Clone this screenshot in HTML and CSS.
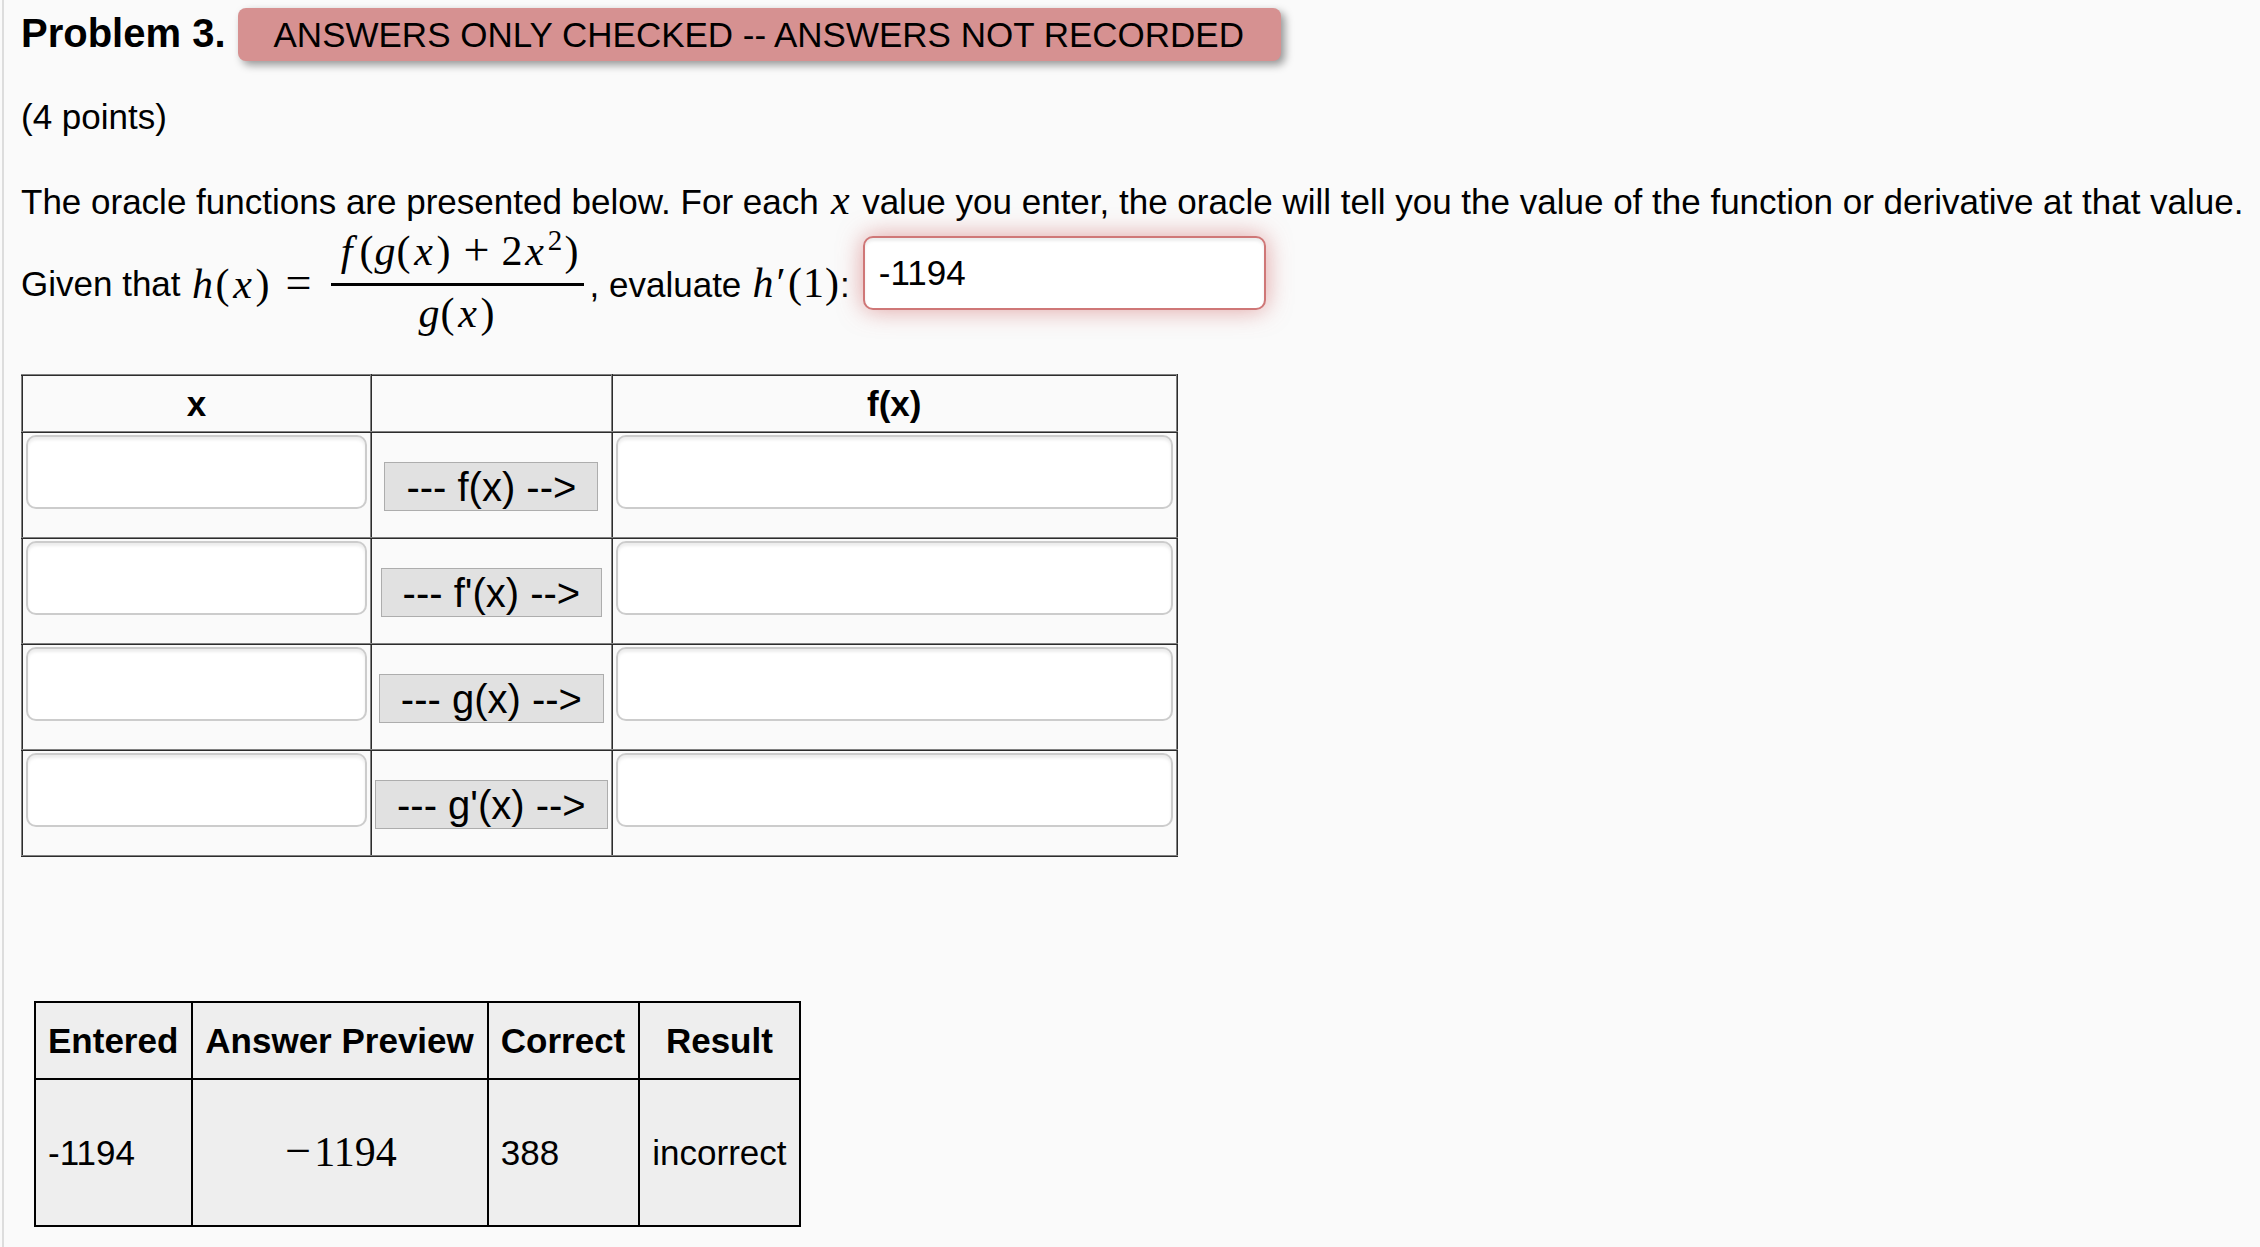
FILE: index.html
```html
<!DOCTYPE html>
<html lang="en">
<head>
<meta charset="utf-8">
<title>Problem 3</title>
<link rel="stylesheet" href="styles.css">
</head>
<body>
<main class="problem">
  <header class="problem-header">
    <h1 class="problem-title">Problem 3.</h1>
    <div class="notice">ANSWERS ONLY CHECKED -- ANSWERS NOT RECORDED</div>
  </header>
  <p class="points">(4 points)</p>
  <p class="intro">The oracle functions are presented below. For each <span class="math"><i class="wide">x</i></span> value you enter, the oracle will tell you the value of the function or derivative at that value.</p>
  <div class="question">
    <span>Given that</span>
    <span class="math lead"><i class="wide">h</i><b class="paren">(</b><i class="wide">x</i><b class="paren">)</b><b class="sign">=</b></span>
    <span class="math fraction">
      <span class="numerator"><i class="wide">f</i><b class="paren">(</b><i class="narrow">g</i><b class="paren">(</b><i class="wide">x</i><b class="paren">)</b><b class="sign">+</b><b class="narrow">2</b><i class="wide">x</i><sup class="power">2</sup><b class="paren">)</b></span>
      <span class="denominator"><i class="narrow">g</i><b class="paren">(</b><i class="wide">x</i><b class="paren">)</b></span>
    </span>
    <label class="prompt" for="answer">, evaluate <span class="math"><i class="wide">h</i><b class="prime">′</b><b class="paren">(</b><b class="narrow">1</b><b class="paren">)</b></span>:</label>
    <input class="field answer incorrect" id="answer" type="text" value="-1194">
  </div>

  <table class="oracle">
    <thead>
      <tr><th>x</th><th></th><th>f(x)</th></tr>
    </thead>
    <tbody>
      <tr>
        <td><input class="field x-value" type="text" aria-label="x for f(x)"></td>
        <td class="action"><button class="evaluate" type="button">--- f(x) --&gt;</button></td>
        <td><input class="field result-value" type="text" aria-label="f(x)"></td>
      </tr>
      <tr>
        <td><input class="field x-value" type="text" aria-label="x for f'(x)"></td>
        <td class="action"><button class="evaluate" type="button">--- f'(x) --&gt;</button></td>
        <td><input class="field result-value" type="text" aria-label="f'(x)"></td>
      </tr>
      <tr>
        <td><input class="field x-value" type="text" aria-label="x for g(x)"></td>
        <td class="action"><button class="evaluate" type="button">--- g(x) --&gt;</button></td>
        <td><input class="field result-value" type="text" aria-label="g(x)"></td>
      </tr>
      <tr>
        <td><input class="field x-value" type="text" aria-label="x for g'(x)"></td>
        <td class="action"><button class="evaluate" type="button">--- g'(x) --&gt;</button></td>
        <td><input class="field result-value" type="text" aria-label="g'(x)"></td>
      </tr>
    </tbody>
  </table>

  <table class="results">
    <thead>
      <tr><th>Entered</th><th>Answer Preview</th><th>Correct</th><th>Result</th></tr>
    </thead>
    <tbody>
      <tr><td>-1194</td><td class="preview"><span class="math"><b class="minus">−</b>1194</span></td><td>388</td><td>incorrect</td></tr>
    </tbody>
  </table>
</main>
</body>
</html>
```

FILE: styles.css
```css
* {
  box-sizing: border-box;
}

body {
  margin: 0;
  background: #fafafa;
  color: #000;
  font: 35px/40px "Liberation Sans", Arial, sans-serif;
}

.problem {
  min-height: 100vh;
  margin-left: 2px;
  padding: 8px 0 20px 17px;
  border-left: 2px solid #ddd;
}

.problem-header {
  display: flex;
  align-items: baseline;
  gap: 12px;
}

.problem-title {
  margin: 0;
  font-size: 40px;
  line-height: 40px;
}

.notice {
  padding: 7px 37px 6px 36px;
  border-radius: 8px;
  background: #d69191;
  box-shadow: 4px 4px 8px rgba(0, 0, 0, 0.4);
}

.points {
  margin: 36px 0 45px;
}

.intro {
  margin: 0;
}

/* Mathematics */

.math {
  font-family: "Liberation Serif", "Times New Roman", serif;
  font-size: 42px;
  line-height: 40px;
}

.math i,
.math b {
  display: inline-block;
  font-weight: normal;
  text-align: center;
}

.intro .math {
  line-height: 1px;
}

.math .wide {
  width: 24px;
}

.math .narrow {
  width: 21px;
}

.math .paren {
  width: 16px;
}

.math .prime {
  width: 12px;
}

.math .sign,
.math .minus {
  width: 32px;
  font-size: 46px;
  line-height: 1px;
}

.math .sign {
  margin: 0 9px;
}

.math.lead .sign {
  margin: 0 6px 0 12px;
}

.power {
  display: inline-block;
  width: 17px;
  font-size: 29px;
  line-height: 1px;
}

.fraction {
  display: flex;
  flex-direction: column;
  text-align: center;
}

.numerator {
  padding: 0 4px 3px;
  border-bottom: 3px solid #000;
  line-height: 58px;
}

.denominator {
  padding-bottom: 6px;
  line-height: 54px;
}

.question {
  display: flex;
  align-items: center;
}

.lead {
  margin: 0 10px;
}

.prompt {
  padding: 0 13px 0 6px;
}

/* Text fields */

.field {
  display: block;
  height: 74px;
  padding: 10px 14px;
  border: 2px solid #ccc;
  border-radius: 10px;
  background: #fff;
  box-shadow: inset 0 3px 3px rgba(0, 0, 0, 0.075);
  color: #000;
  font: inherit;
}

.answer {
  align-self: flex-start;
  width: 403px;
  margin-top: 14px;
}

.incorrect {
  border-color: #cf7777;
  box-shadow: inset 0 3px 3px rgba(0, 0, 0, 0.075), 0 0 25px rgba(207, 100, 100, 0.6);
}

/* Oracle table */

.oracle {
  margin-top: 28px;
  border: 2px outset gray;
  border-collapse: collapse;
}

.oracle th,
.oracle td {
  padding: 2px 3px 28px;
  border: 2px inset gray;
}

.oracle th {
  padding: 8px 3px 7px;
}

.oracle .action {
  padding: 3px 3px 0;
  text-align: center;
}

.x-value {
  width: 341px;
}

.result-value {
  width: 557px;
}

.evaluate {
  height: 49px;
  padding: 0 21px;
  border: 1px solid #adadad;
  background: #e1e1e1;
  color: #000;
  font: 40px/46px "Liberation Sans", Arial, sans-serif;
  vertical-align: middle;
}

/* Results table */

.results {
  margin: 144px 0 0 13px;
  border-collapse: collapse;
  background: #eee;
}

.results th,
.results td {
  padding: 18px 13px 17px 12px;
  border: 2px solid #000;
  text-align: left;
}

.results td {
  padding: 52px 13px 51px 12px;
}

.results th:last-child,
.results .preview {
  text-align: center;
}
```
